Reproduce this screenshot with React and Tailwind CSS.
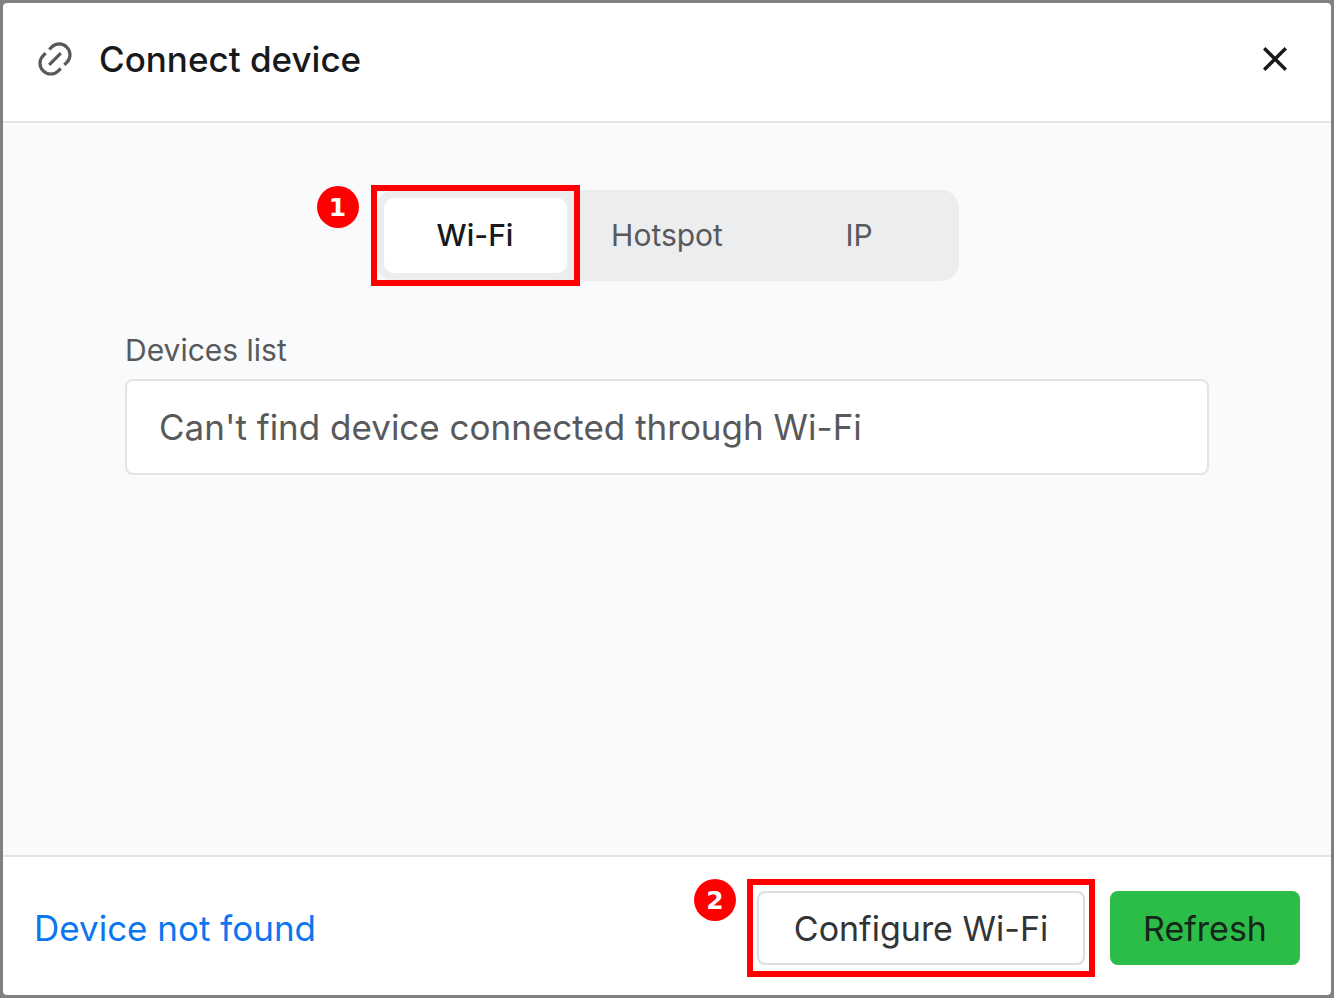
import clsx from "clsx";

const tabs = ["Wi-Fi", "Hotspot", "IP"];

function LinkIcon() {
  return (
    <svg className="h-9 w-9" viewBox="0 0 36 36" fill="none" stroke="currentColor" strokeWidth="3.2" aria-hidden="true">
      <path d="M12.3 8.5 14.6 6.1a10.6 10.6 0 0 1 15.2 0a10.6 10.6 0 0 1 0 15.2l-2.5 2.5" />
      <path d="M8.6 12.2 6.2 14.6a10.6 10.6 0 0 0 0 15.2a10.6 10.6 0 0 0 15.2 0l2.3-2.3" />
      <path d="M12.2 23.8 23.8 12.2" />
    </svg>
  );
}

function CloseIcon() {
  return (
    <svg className="h-6 w-6" viewBox="0 0 24 24" fill="none" stroke="currentColor" strokeWidth="3.4" aria-hidden="true">
      <path d="M1.2 1.2 22.8 22.8M22.8 1.2 1.2 22.8" />
    </svg>
  );
}

function Step({ number, className }) {
  return (
    <span
      className={clsx(
        "absolute flex h-[42px] w-[42px] items-center justify-center rounded-full bg-[#ff0000] font-['DejaVu_Sans',sans-serif] text-[25px] leading-none font-bold text-white",
        className
      )}
    >
      {number}
    </span>
  );
}

export default function App() {
  return (
    <div className="min-h-screen flex flex-col bg-[#808080] p-[3px] font-['Inter',sans-serif]">
      <div className="flex grow flex-col overflow-hidden rounded-[4px] bg-white">
        <header className="flex items-center justify-between border-b-2 border-[#e3e4e5] pt-7 pb-[34px] pl-[34px] pr-11">
          <div className="flex items-center gap-[26px] text-[#58595b]">
            <LinkIcon />
            <h1 className="text-[35px] leading-[56px] font-medium text-[#18191b]">Connect device</h1>
          </div>
          <button type="button" aria-label="Close" className="text-[#18191b]">
            <CloseIcon />
          </button>
        </header>

        <main className="grow bg-[#f9fafc] px-[122px] pt-[67px]">
          <div className="mx-auto flex w-fit gap-[9px] rounded-[18px] bg-[#ecedef] p-2">
            {tabs.map((tab, i) => (
              <div key={tab} className="relative">
                <button
                  type="button"
                  className={clsx(
                    "block h-[75px] w-[183px] rounded-[10px] text-[30px]",
                    i === 0 ? "bg-white font-medium text-[#18191b]" : "text-[#58595b]"
                  )}
                >
                  {tab}
                </button>
                {i === 0 && (
                  <>
                    <div className="pointer-events-none absolute -inset-[13px] border-[6px] border-[#ff0000]" />
                    <Step number={1} className="-top-3 -left-[67px]" />
                  </>
                )}
              </div>
            ))}
          </div>

          <label htmlFor="devices" className="mt-[46px] block text-[30px] leading-[46px] text-[#58595b]">
            Devices list
          </label>
          <input
            id="devices"
            readOnly
            value="Can't find device connected through Wi-Fi"
            className="mt-[6px] block h-24 w-full rounded-lg border-2 border-[#e3e4e5] bg-white px-8 text-[35px] text-[#58595b] outline-none"
          />
        </main>

        <footer className="flex items-center justify-between border-t-2 border-[#e3e4e5] px-[31px] pt-[34px] pb-[30px]">
          <a href="#device-not-found" className="text-[35px] text-[#0b76ef]">
            Device not found
          </a>
          <div className="flex gap-[25px]">
            <div className="relative">
              <button
                type="button"
                className="block h-[74px] w-[328px] rounded-lg border-2 border-[#dcddde] bg-white text-[34px] text-[#333435]"
              >
                Configure Wi-Fi
              </button>
              <div className="pointer-events-none absolute -inset-x-[10px] -inset-y-3 border-[6px] border-[#ff0000]" />
              <Step number={2} className="-top-3 -left-[63px]" />
            </div>
            <button type="button" className="h-[74px] w-[190px] rounded-lg bg-[#2bbd48] text-[34px] text-[#17251a]">
              Refresh
            </button>
          </div>
        </footer>
      </div>
    </div>
  );
}
